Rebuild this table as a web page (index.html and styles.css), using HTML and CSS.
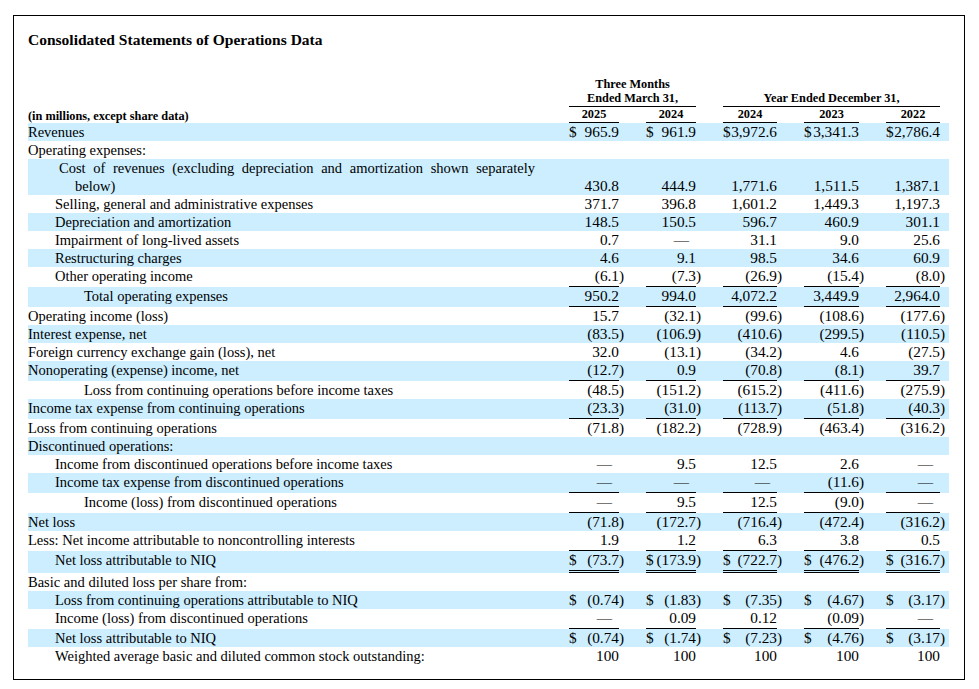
FILE: index.html
```html
<!DOCTYPE html>
<html>
<head>
<meta charset="utf-8">
<title>Consolidated Statements of Operations Data</title>
<link rel="stylesheet" href="styles.css">
</head>
<body>
<div class="sheet">
<div class="title">Consolidated Statements of Operations Data</div>
<table class="ops">
<colgroup>
<col class="c-label"><col class="c-v50"><col class="c-p"><col class="c-v50"><col class="c-p"><col class="c-v54"><col class="c-p"><col class="c-v55"><col class="c-p"><col class="c-v54"><col class="c-pe">
</colgroup>
<thead>
<tr class="h"><td></td><td colspan="3">Three Months</td><td colspan="7"></td></tr>
<tr class="h"><td></td><td colspan="3" class="hu">Ended March 31,</td><td></td><td colspan="5" class="hu">Year Ended December 31,</td><td></td></tr>
<tr class="h"><td class="hl-label">(in millions, except share data)</td><td class="hu">2025</td><td></td><td class="hu">2024</td><td></td><td class="hu">2024</td><td></td><td class="hu">2023</td><td></td><td class="hu">2022</td><td></td></tr>
</thead>
<tbody>
<tr class="hl"><td class="l">Revenues</td><td class="v"><span class="c">$</span>965.9</td><td class="p"></td><td class="v"><span class="c">$</span>961.9</td><td class="p"></td><td class="v"><span class="c">$</span>3,972.6</td><td class="p"></td><td class="v"><span class="c">$</span>3,341.3</td><td class="p"></td><td class="v"><span class="c">$</span>2,786.4</td><td class="p"></td></tr>
<tr><td class="l">Operating expenses:</td><td class="v"></td><td class="p"></td><td class="v"></td><td class="p"></td><td class="v"></td><td class="p"></td><td class="v"></td><td class="p"></td><td class="v"></td><td class="p"></td></tr>
<tr class="hl tall"><td class="l cw">Cost of revenues (excluding depreciation and amortization shown separately below)</td><td class="v">430.8</td><td class="p"></td><td class="v">444.9</td><td class="p"></td><td class="v">1,771.6</td><td class="p"></td><td class="v">1,511.5</td><td class="p"></td><td class="v">1,387.1</td><td class="p"></td></tr>
<tr><td class="l i1">Selling, general and administrative expenses</td><td class="v">371.7</td><td class="p"></td><td class="v">396.8</td><td class="p"></td><td class="v">1,601.2</td><td class="p"></td><td class="v">1,449.3</td><td class="p"></td><td class="v">1,197.3</td><td class="p"></td></tr>
<tr class="hl"><td class="l i1">Depreciation and amortization</td><td class="v">148.5</td><td class="p"></td><td class="v">150.5</td><td class="p"></td><td class="v">596.7</td><td class="p"></td><td class="v">460.9</td><td class="p"></td><td class="v">301.1</td><td class="p"></td></tr>
<tr><td class="l i1">Impairment of long-lived assets</td><td class="v">0.7</td><td class="p"></td><td class="v dash">—</td><td class="p"></td><td class="v">31.1</td><td class="p"></td><td class="v">9.0</td><td class="p"></td><td class="v">25.6</td><td class="p"></td></tr>
<tr class="hl"><td class="l i1">Restructuring charges</td><td class="v">4.6</td><td class="p"></td><td class="v">9.1</td><td class="p"></td><td class="v">98.5</td><td class="p"></td><td class="v">34.6</td><td class="p"></td><td class="v">60.9</td><td class="p"></td></tr>
<tr><td class="l i1">Other operating income</td><td class="v u">(6.1</td><td class="p">)</td><td class="v u">(7.3</td><td class="p">)</td><td class="v u">(26.9</td><td class="p">)</td><td class="v u">(15.4</td><td class="p">)</td><td class="v u">(8.0</td><td class="p">)</td></tr>
<tr class="hl"><td class="l i2">Total operating expenses</td><td class="v u">950.2</td><td class="p"></td><td class="v u">994.0</td><td class="p"></td><td class="v u">4,072.2</td><td class="p"></td><td class="v u">3,449.9</td><td class="p"></td><td class="v u">2,964.0</td><td class="p"></td></tr>
<tr><td class="l">Operating income (loss)</td><td class="v">15.7</td><td class="p"></td><td class="v">(32.1</td><td class="p">)</td><td class="v">(99.6</td><td class="p">)</td><td class="v">(108.6</td><td class="p">)</td><td class="v">(177.6</td><td class="p">)</td></tr>
<tr class="hl"><td class="l">Interest expense, net</td><td class="v">(83.5</td><td class="p">)</td><td class="v">(106.9</td><td class="p">)</td><td class="v">(410.6</td><td class="p">)</td><td class="v">(299.5</td><td class="p">)</td><td class="v">(110.5</td><td class="p">)</td></tr>
<tr><td class="l">Foreign currency exchange gain (loss), net</td><td class="v">32.0</td><td class="p"></td><td class="v">(13.1</td><td class="p">)</td><td class="v">(34.2</td><td class="p">)</td><td class="v">4.6</td><td class="p"></td><td class="v">(27.5</td><td class="p">)</td></tr>
<tr class="hl"><td class="l">Nonoperating (expense) income, net</td><td class="v u">(12.7</td><td class="p">)</td><td class="v u">0.9</td><td class="p"></td><td class="v u">(70.8</td><td class="p">)</td><td class="v u">(8.1</td><td class="p">)</td><td class="v u">39.7</td><td class="p"></td></tr>
<tr><td class="l i2">Loss from continuing operations before income taxes</td><td class="v">(48.5</td><td class="p">)</td><td class="v">(151.2</td><td class="p">)</td><td class="v">(615.2</td><td class="p">)</td><td class="v">(411.6</td><td class="p">)</td><td class="v">(275.9</td><td class="p">)</td></tr>
<tr class="hl"><td class="l">Income tax expense from continuing operations</td><td class="v u">(23.3</td><td class="p">)</td><td class="v u">(31.0</td><td class="p">)</td><td class="v u">(113.7</td><td class="p">)</td><td class="v u">(51.8</td><td class="p">)</td><td class="v u">(40.3</td><td class="p">)</td></tr>
<tr><td class="l">Loss from continuing operations</td><td class="v">(71.8</td><td class="p">)</td><td class="v">(182.2</td><td class="p">)</td><td class="v">(728.9</td><td class="p">)</td><td class="v">(463.4</td><td class="p">)</td><td class="v">(316.2</td><td class="p">)</td></tr>
<tr class="hl"><td class="l">Discontinued operations:</td><td class="v"></td><td class="p"></td><td class="v"></td><td class="p"></td><td class="v"></td><td class="p"></td><td class="v"></td><td class="p"></td><td class="v"></td><td class="p"></td></tr>
<tr><td class="l i1">Income from discontinued operations before income taxes</td><td class="v dash">—</td><td class="p"></td><td class="v">9.5</td><td class="p"></td><td class="v">12.5</td><td class="p"></td><td class="v">2.6</td><td class="p"></td><td class="v dash">—</td><td class="p"></td></tr>
<tr class="hl"><td class="l i1">Income tax expense from discontinued operations</td><td class="v u dash">—</td><td class="p"></td><td class="v u dash">—</td><td class="p"></td><td class="v u dash">—</td><td class="p"></td><td class="v u">(11.6</td><td class="p">)</td><td class="v u dash">—</td><td class="p"></td></tr>
<tr><td class="l i2">Income (loss) from discontinued operations</td><td class="v u dash">—</td><td class="p"></td><td class="v u">9.5</td><td class="p"></td><td class="v u">12.5</td><td class="p"></td><td class="v u">(9.0</td><td class="p">)</td><td class="v u dash">—</td><td class="p"></td></tr>
<tr class="hl"><td class="l">Net loss</td><td class="v">(71.8</td><td class="p">)</td><td class="v">(172.7</td><td class="p">)</td><td class="v">(716.4</td><td class="p">)</td><td class="v">(472.4</td><td class="p">)</td><td class="v">(316.2</td><td class="p">)</td></tr>
<tr><td class="l">Less: Net income attributable to noncontrolling interests</td><td class="v u">1.9</td><td class="p"></td><td class="v u">1.2</td><td class="p"></td><td class="v u">6.3</td><td class="p"></td><td class="v u">3.8</td><td class="p"></td><td class="v u">0.5</td><td class="p"></td></tr>
<tr class="hl"><td class="l i1">Net loss attributable to NIQ</td><td class="v uu"><span class="c">$</span>(73.7</td><td class="p">)</td><td class="v uu"><span class="c">$</span>(173.9</td><td class="p">)</td><td class="v uu"><span class="c">$</span>(722.7</td><td class="p">)</td><td class="v uu"><span class="c">$</span>(476.2</td><td class="p">)</td><td class="v uu"><span class="c">$</span>(316.7</td><td class="p">)</td></tr>
<tr><td class="l">Basic and diluted loss per share from:</td><td class="v"></td><td class="p"></td><td class="v"></td><td class="p"></td><td class="v"></td><td class="p"></td><td class="v"></td><td class="p"></td><td class="v"></td><td class="p"></td></tr>
<tr class="hl"><td class="l i1">Loss from continuing operations attributable to NIQ</td><td class="v"><span class="c">$</span>(0.74</td><td class="p">)</td><td class="v"><span class="c">$</span>(1.83</td><td class="p">)</td><td class="v"><span class="c">$</span>(7.35</td><td class="p">)</td><td class="v"><span class="c">$</span>(4.67</td><td class="p">)</td><td class="v"><span class="c">$</span>(3.17</td><td class="p">)</td></tr>
<tr><td class="l i1">Income (loss) from discontinued operations</td><td class="v u dash">—</td><td class="p"></td><td class="v u">0.09</td><td class="p"></td><td class="v u">0.12</td><td class="p"></td><td class="v u">(0.09</td><td class="p">)</td><td class="v u dash">—</td><td class="p"></td></tr>
<tr class="hl"><td class="l i1">Net loss attributable to NIQ</td><td class="v"><span class="c">$</span>(0.74</td><td class="p">)</td><td class="v"><span class="c">$</span>(1.74</td><td class="p">)</td><td class="v"><span class="c">$</span>(7.23</td><td class="p">)</td><td class="v"><span class="c">$</span>(4.76</td><td class="p">)</td><td class="v"><span class="c">$</span>(3.17</td><td class="p">)</td></tr>
<tr><td class="l i1">Weighted average basic and diluted common stock outstanding:</td><td class="v">100</td><td class="p"></td><td class="v">100</td><td class="p"></td><td class="v">100</td><td class="p"></td><td class="v">100</td><td class="p"></td><td class="v">100</td><td class="p"></td></tr>
</tbody>
</table>
</div>
</body>
</html>
```
FILE: styles.css
```css
html, body {
  margin: 0;
  padding: 0;
  background: #ffffff;
}

body {
  font-family: "Liberation Serif", "Times New Roman", serif;
  color: #000000;
}

.sheet {
  width: 921px;
  margin: 15px 0 0 13px;
  padding: 15px 15px 14px 14px;
  border: 1px solid #000000;
}

.title {
  font-size: 15.5px;
  font-weight: bold;
  line-height: 18px;
  margin-bottom: 28px;
}

.ops {
  width: 921px;
  table-layout: fixed;
  border-collapse: separate;
  border-spacing: 0;
}

.c-label { width: 541px; }
.c-v50 { width: 50px; }
.c-v54 { width: 54px; }
.c-v55 { width: 55px; }
.c-p { width: 27px; }
.c-pe { width: 9px; }

.ops td {
  padding: 0;
  vertical-align: bottom;
  white-space: nowrap;
}

.h td {
  font-size: 12.3px;
  font-weight: bold;
  line-height: 14px;
  text-align: center;
}

.h td.hl-label {
  text-align: left;
}

.h td.hu {
  border-bottom: 1px solid #000000;
  padding-bottom: 1px;
}

.ops tbody td {
  line-height: 18px;
  vertical-align: baseline;
}

.ops tbody tr.tall td {
  vertical-align: bottom;
}

tr.hl td {
  background: #cceeff;
}

td.l {
  font-size: 14.5px;
  padding-right: 20px;
}

td.i1 { padding-left: 27px; }
td.i2 { padding-left: 56px; }

.ops td.cw {
  white-space: normal;
  text-align: justify;
  padding-left: 47px;
  padding-right: 34px;
  text-indent: -16px;
}

td.v {
  font-size: 15.3px;
  text-align: right;
}

td.v.dash {
  padding-right: 7px;
}

td.v.u {
  border-bottom: 1px solid #000000;
  padding-bottom: 1px;
}

td.v.uu {
  border-bottom: 3px double #000000;
  padding-bottom: 1px;
}

.c {
  float: left;
}

td.p {
  font-size: 15.3px;
  text-align: left;
}
```
